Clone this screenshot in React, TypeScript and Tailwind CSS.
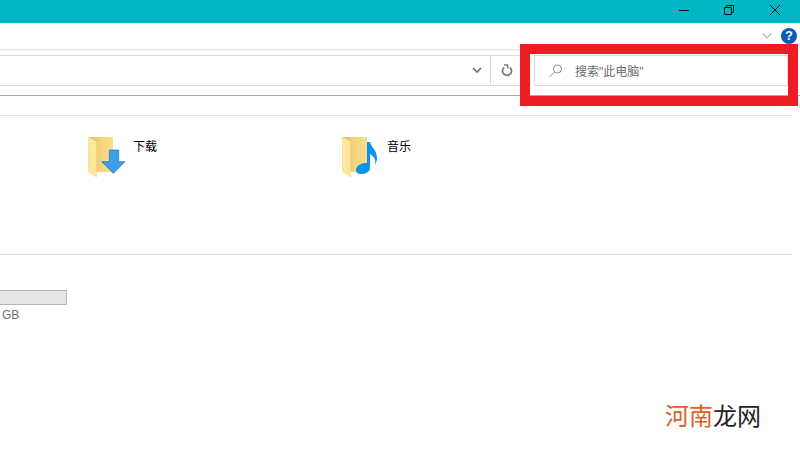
function FolderBase({ id }: { id: string }) {
  return (
    <>
      <defs>
        <linearGradient id={id} x1="0" y1="0" x2="1" y2="0">
          <stop offset="0" stopColor="#dfb95f" />
          <stop offset="0.45" stopColor="#f3d47c" />
          <stop offset="1" stopColor="#f9de8e" />
        </linearGradient>
      </defs>
      <path d="M1 0h24v35H1z" fill={`url(#${id})`} />
      <path d="M0 0 8.500 4.500V40L0 34.500z" fill="#fde79f" stroke="#ecd28a" strokeWidth="0.5" />
    </>
  );
}

function DownloadsIcon() {
  return (
    <svg width="38" height="40" viewBox="0 0 38 40" className="shrink-0">
      <FolderBase id="folder-dl" />
      <path d="M21.300 13h9.400v11.700H37L25.400 36.300 13.700 24.700h7.600z" fill="#3d9de9" stroke="#2b7cc0" strokeWidth="0.8" />
    </svg>
  );
}

function MusicIcon() {
  return (
    <svg width="38" height="40" viewBox="0 0 38 40" className="shrink-0">
      <FolderBase id="folder-music" />
      <path
        d="M25 5h3c1 5 7 8 7 16 0 3-1 5-2 7 1-4 0-8-5-11v14c0 4-5 6-9 6-3 0-5-1-5-4 0-4 5-7 9-7 1 0 2 0 2 .5z"
        fill="#0a96e8"
      />
    </svg>
  );
}

function SearchGlass() {
  return (
    <svg width="14" height="14" viewBox="0 0 14 14" fill="none" stroke="#8a8a8a" strokeWidth="1">
      <circle cx="8.500" cy="5" r="4" />
      <path d="M5.500 8 .5 13" stroke="#b08f7c" />
    </svg>
  );
}

function RefreshIcon() {
  return (
    <svg width="12" height="13" viewBox="0 0 12 13" fill="none" stroke="#7c7c7c" strokeWidth="1.800">
      <path d="M8.800 3.400a4.500 4.500 0 1 1-5.600 0" />
      <path d="M3 .9h3.600v3.500" strokeWidth="1.500" />
    </svg>
  );
}

export default function App() {
  return (
    <div className="relative flex h-[450px] w-[800px] flex-col overflow-hidden bg-white font-['Liberation_Sans','Noto_Sans_CJK_SC',sans-serif]">
      {/* title bar */}
      <div className="flex h-[23px] shrink-0 items-start justify-end bg-[#00b7c3] pr-[2px]">
        <div className="flex w-[45px] justify-center pt-[10px]">
          <div className="h-px w-[10px] bg-[#111]" />
        </div>
        <div className="flex w-[46px] justify-center pt-[5px]">
          <svg width="10" height="10" viewBox="0 0 10 10" fill="none" stroke="#111" strokeWidth="1">
            <path d="M.5 2.500h7v7h-7z" />
            <path d="M2.500 2.500v-2h7v7h-2" />
          </svg>
        </div>
        <div className="flex w-[46px] justify-center pt-[5px]">
          <svg width="10" height="10" viewBox="0 0 10 10" fill="none" stroke="#111" strokeWidth="1">
            <path d="M0 0l10 10M10 0 0 10" />
          </svg>
        </div>
      </div>

      {/* ribbon */}
      <div className="flex h-[27px] shrink-0 items-center justify-end gap-[9px] border-b border-[#e1e1e1] pr-[3px]">
        <svg width="10" height="6" viewBox="0 0 10 6" fill="none" stroke="#b4b4b4" strokeWidth="1.200">
          <path d="M.5.5 5 5 9.500.5" />
        </svg>
        <div className="flex h-[16px] w-[16px] items-center justify-center rounded-full bg-[#0a5fb4] text-[13px] font-bold text-white">
          ?
        </div>
      </div>

      {/* address row */}
      <div className="flex h-[46px] shrink-0 items-start border-b border-[#a9a9a9] pt-[5px]">
        <div className="flex h-[31px] w-[520px] items-center border-y border-[#d9d9d9]">
          <div className="flex flex-1 justify-end pr-[8px]">
            <svg width="10" height="7" viewBox="0 0 10 7" fill="none" stroke="#6e6e6e" strokeWidth="1.600">
              <path d="M1 1l4 4 4-4" />
            </svg>
          </div>
          <div className="flex h-full w-[30px] items-center border-l border-[#d9d9d9] pl-[10px]">
            <RefreshIcon />
          </div>
        </div>
      </div>

      {/* content */}
      <div className="mt-[19px] flex-1 pr-[7px]">
        <div className="border-t border-[#e5e5e5]" />
        <div className="flex h-[138px] items-start pt-[21px]">
          <div className="ml-[88px] flex w-[254px] gap-[7px]">
            <DownloadsIcon />
            <span className="mt-[2px] text-[12px] leading-[16px] text-black">下载</span>
          </div>
          <div className="flex gap-[7px]">
            <MusicIcon />
            <span className="mt-[2px] text-[12px] leading-[16px] text-black">音乐</span>
          </div>
        </div>
        <div className="border-t border-[#e5e5e5]" />
        <div className="mt-[35px] h-[15px] w-[67px] border border-l-0 border-[#b5b5b5] bg-[#e6e6e6]" />
        <div className="mt-[2px] pl-[2px] text-[12px] leading-[16px] text-[#6d6d6d]">GB</div>
      </div>

      {/* red highlight drawn over the search box */}
      <div className="absolute left-[520px] top-[44px] flex h-[62px] w-[278px] items-start border-[10px] border-[#ed1c24] bg-white">
        <div className="ml-[4px] mt-[1px] flex h-[31px] flex-1 items-center border border-[#d9d9d9] pl-[14px]">
          <SearchGlass />
          <span className="ml-[12px] pt-[2px] text-[12px] text-[#6d6d6d]">搜索"此电脑"</span>
        </div>
        <div className="absolute inset-x-0 bottom-0 h-px bg-[#a9a9a9]" />
      </div>

      {/* watermark */}
      <div className="absolute left-[665px] top-[401px] font-['Noto_Sans_CJK_SC',sans-serif] text-[24px] leading-[28px]">
        <span className="text-[#e0601f]">河南</span>
        <span className="text-[#222]">龙网</span>
      </div>
    </div>
  );
}
